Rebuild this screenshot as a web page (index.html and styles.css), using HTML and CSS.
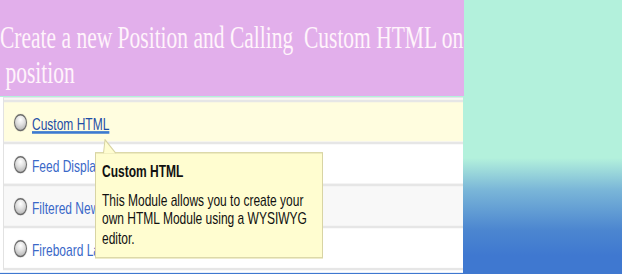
FILE: index.html
```html
<!DOCTYPE html>
<html lang="en">
<head>
    <meta charset="UTF-8">
    <meta name="viewport" content="width=device-width, initial-scale=1.0">
    <title>Custom HTML Position</title>
    <link rel="stylesheet" href="styles.css">
</head>
<body>
    <div class="page">
        <div class="banner">
            <h1 class="banner-title">Create a new Position and Calling&nbsp; Custom HTML on<br>&nbsp;position</h1>
        </div>

        <!-- module picker screenshot -->
        <div class="shot">
            <div class="module-list">
                <div class="module-row active">
                    <span class="radio"></span>
                    <a href="#" class="module-link">Custom HTML</a>
                </div>
                <div class="module-row">
                    <span class="radio"></span>
                    <a href="#" class="module-link">Feed Display</a>
                </div>
                <div class="module-row alt">
                    <span class="radio"></span>
                    <a href="#" class="module-link">Filtered News</a>
                </div>
                <div class="module-row">
                    <span class="radio"></span>
                    <a href="#" class="module-link">Fireboard Latest</a>
                </div>
            </div>

            <div class="tip">
                <svg class="tip-arrow" width="24" height="11" viewBox="0 0 24 11">
                    <path d="M7.5 11 L9 0.5 L20 11" fill="#fffdd0" stroke="#d8d4a4" stroke-width="1"/>
                </svg>
                <strong class="tip-title">Custom HTML</strong>
                <p class="tip-text">This Module allows you to create your own HTML Module using a WYSIWYG editor.</p>
            </div>
        </div>
    </div>
</body>
</html>
```

FILE: styles.css
```css
body {
    margin: 0;
    height: 274px;
    overflow: hidden;
    background: linear-gradient(#b3f1dc 0, #b3f1dc 158px, #7ab6d8 190px, #4c86d0 230px, #3f78d0 256px);
}
.page {
    width: 464px;
}
.banner {
    height: 96px;
    padding-top: 20px;
    box-sizing: border-box;
    background-color: #e2afeb;
}
.banner-title {
    margin: 0;
    font-family: "Liberation Serif", "Times New Roman", serif;
    font-size: 21.5px;
    font-weight: normal;
    line-height: 24px;
    color: #fff4fb;
    white-space: nowrap;
    transform: scaleY(1.47);
    transform-origin: 0 0;
}
.shot {
    position: relative;
    margin-top: 1px;
    width: 463px;
    padding: 0 0 2px 3px;
    box-sizing: border-box;
    background-color: #fff;
    font-family: "Liberation Sans", Arial, sans-serif;
    font-size: 12px;
    transform: scaleY(1.3125); /* the source picture is stretched */
    transform-origin: 0 0;
}
.module-list {
    border-top: 1px solid #e6e6e6;
    border-left: 1px solid #e2e2e2;
    border-bottom: 2px solid #e6e6e6;
    padding-top: 1px;
}
.module-row {
    display: flex;
    align-items: center;
    height: 30px;
    padding-left: 10px;
    border-top: 2px solid #e6e6e6;
    background-color: #fff;
}
.module-row.active {
    background-color: #fffddf;
}
.module-row.alt {
    background-color: #f8f8f8;
}
.radio {
    width: 11px;
    height: 11px;
    margin-right: 5px;
    border: 1px solid #6a6a6a;
    border-radius: 50%;
    background: radial-gradient(circle at 50% 30%, #fff 0, #e2e2e2 40%, #a8a8a8 100%);
    box-shadow: 0 0 1px rgba(0, 0, 0, 0.3);
}
.module-link {
    color: #3a68c8;
    text-decoration: none;
    line-height: 14px;
    padding-top: 3px;
    white-space: nowrap;
}
.active .module-link {
    color: #1f4ea6;
    text-decoration: underline;
    text-decoration-color: #3d7ad0;
    text-decoration-thickness: 2px;
    text-underline-offset: 1px;
}
.tip {
    position: absolute;
    left: 95px;
    top: 42px;
    width: 228px;
    height: 81px;
    box-sizing: border-box;
    padding: 7px 6px 0;
    background-color: #fffdd0;
    border: 1px solid #d8d4a4;
    color: #111;
    line-height: 14px;
}
.tip-arrow {
    position: absolute;
    left: 0;
    top: -11px;
    display: block;
}
.tip-title {
    display: block;
    font-weight: bold;
}
.tip-text {
    margin: 8px 0 0;
    line-height: 14.3px;
}
```
